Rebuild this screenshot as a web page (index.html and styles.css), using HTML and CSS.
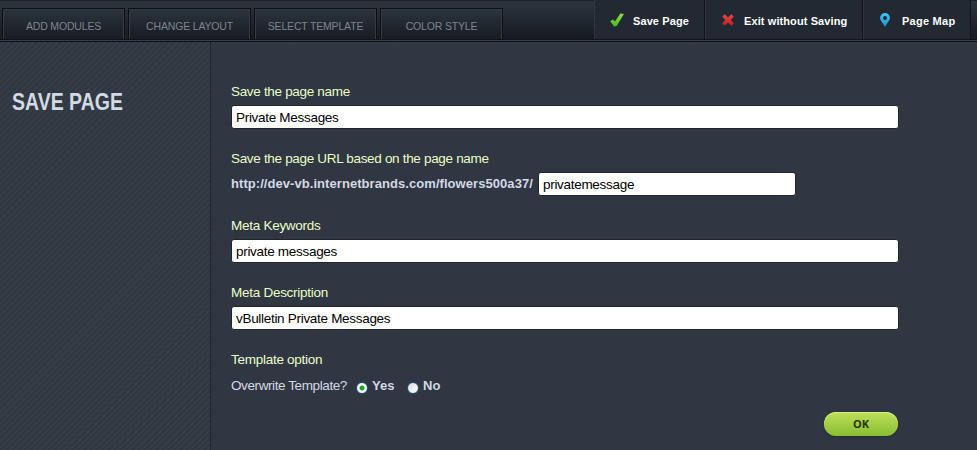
FILE: index.html
```html
<!DOCTYPE html>
<html lang="en">
<head>
<meta charset="utf-8">
<title>Save Page</title>
<link rel="stylesheet" href="styles.css">
</head>
<body>
<header class="toolbar">
  <nav class="tabs">
    <a class="tab">ADD MODULES</a>
    <a class="tab">CHANGE LAYOUT</a>
    <a class="tab">SELECT TEMPLATE</a>
    <a class="tab">COLOR STYLE</a>
  </nav>
  <div class="actions">
    <a class="action save">
      <svg width="14" height="14" viewBox="0 0 14 14"><defs><linearGradient id="g" x2="0" y2="1"><stop stop-color="#8be34a"/><stop offset="1" stop-color="#4cba18"/></linearGradient></defs><path d="M.2 8.2 3 6.5 5 8.5 10.4.4 13.9 1 6.7 13 4.2 13.6Z" fill="url(#g)"/></svg>
      <span>Save Page</span>
    </a>
    <a class="action exit">
      <svg width="12" height="12" viewBox="0 0 12 12"><defs><linearGradient id="r" x2="0" y2="1"><stop stop-color="#ee4545"/><stop offset="1" stop-color="#c51c24"/></linearGradient></defs><path d="M2.7.3 6 3.5 9.3.3 11.8 2.7 8.7 6 11.8 9.2 9.3 11.7 6 8.5 2.7 11.7.2 9.2 3.3 6 .2 2.7Z" fill="url(#r)"/></svg>
      <span>Exit without Saving</span>
    </a>
    <a class="action map">
      <svg width="10" height="14" viewBox="0 0 10 14"><defs><linearGradient id="b" x2="0" y2="1"><stop stop-color="#42c5f8"/><stop offset="1" stop-color="#1593d8"/></linearGradient></defs><path fill-rule="evenodd" d="M5 .1A4.9 4.9 0 0 1 9.9 5C9.9 7.7 7.2 9.6 5 13.9 2.8 9.6.1 7.7.1 5A4.9 4.9 0 0 1 5 .1ZM5 3A2 2 0 1 0 5 7 2 2 0 0 0 5 3Z" fill="url(#b)"/></svg>
      <span>Page Map</span>
    </a>
  </div>
</header>
<div class="body">
  <aside class="sidebar"><h1><span>SAVE PAGE</span></h1></aside>
  <main class="form">
    <section class="field">
      <label class="label label-name" for="name">Save the page name</label>
      <input id="name" class="input" value="Private Messages">
    </section>
    <section class="field">
      <label class="label label-name" for="url">Save the page URL based on the page name</label>
      <div class="url-row"><span class="base">http://dev-vb.internetbrands.com/flowers500a37/</span><input id="url" class="input short" value="privatemessage"></div>
    </section>
    <section class="field">
      <label class="label" for="keys">Meta Keywords</label>
      <input id="keys" class="input" value="private messages">
    </section>
    <section class="field">
      <label class="label" for="desc">Meta Description</label>
      <input id="desc" class="input" value="vBulletin Private Messages">
    </section>
    <section class="option">
      <div class="label">Template option</div>
      <div class="radios">
        <span class="question">Overwrite Template?</span>
        <span class="radio on"></span><b class="yes">Yes</b>
        <span class="radio"></span><b>No</b>
      </div>
    </section>
    <button class="ok">OK</button>
  </main>
</div>
</body>
</html>
```
FILE: styles.css
```css
* { box-sizing: border-box; }
body {
  margin: 0;
  height: 450px;
  overflow: hidden;
  background: #303642;
  color: #d3d9e5;
  font: 13px/16px "Liberation Sans", Arial, sans-serif;
}
.toolbar {
  display: flex;
  justify-content: space-between;
  height: 42px;
  padding: 0 6px 0 2px;
  background:
    linear-gradient(#10151a 0 1px, #3a3f43 1px 2px, #0c1115 2px) 0 100% / 100% 3px no-repeat,
    linear-gradient(#1c2228, #1c2228) 0 0 / 100% 1px no-repeat,
    linear-gradient(#2c353f, #161b21 39px);
}
.tabs { display: flex; gap: 3px; padding-top: 8px; }
.tab {
  width: 123px;
  height: 31px;
  border: 1px solid #0c1014;
  border-bottom: 0;
  box-shadow: inset 1px 1px #363b40, inset -1px 0 #363b40;
  background: linear-gradient(#2b343e, #171c22);
  color: #7d858f;
  font-size: 10.5px;
  line-height: 34px;
  text-align: center;
  letter-spacing: -.17px;
}
.actions { display: flex; height: 39px; }
.action {
  display: flex;
  align-items: center;
  height: 39px;
  padding-top: 3px;
  background: #222932;
  border-right: 1px solid #10151a;
  box-shadow: inset 1px 0 #303741;
  color: #fff;
  font-size: 11px;
  font-weight: bold;
  letter-spacing: .1px;
  white-space: nowrap;
}
.save { width: 111px; padding-left: 16px; gap: 9px; }
.exit { width: 158px; padding-left: 17px; gap: 10px; }
.map { width: 108px; padding-left: 17px; gap: 12px; letter-spacing: .25px; }
.action svg { margin-top: -2px; }
.body {
  display: flex;
  height: 408px;
  background: repeating-linear-gradient(135deg, #353e46 0 1.4px, #303642 1.4px 2.8px) 0 0 / 100% 3px no-repeat;
}
.sidebar {
  flex: none;
  width: 211px;
  padding: 48px 0 0 12px;
  border-right: 1px solid #20262d;
  background: repeating-linear-gradient(135deg, #2f3740 0 1.4px, #353e46 2.4px 3.4px, #2f3740 4.24px);
}
h1 { margin: 0; font-size: 23px; line-height: 25px; color: #d3d9e5; }
h1 span { display: inline-block; transform: scaleX(.848); transform-origin: 0 0; white-space: nowrap; }
.form { flex: 1; display: flex; flex-direction: column; padding: 42px 78px 0 20px; }
.field { height: 67px; }
.label { display: block; color: #e9ffc8; font-size: 13.5px; letter-spacing: -.27px; white-space: nowrap; }
.label-name { letter-spacing: -.32px; }
.input {
  display: block;
  width: 668px;
  height: 24px;
  margin-top: 5px;
  padding: 1px 4px 0;
  border: 1px solid #1e252d;
  border-radius: 3px;
  background: #fff;
  color: #000;
  font: 13.5px "Liberation Sans", Arial, sans-serif;
  letter-spacing: -.3px;
}
.url-row { display: flex; align-items: center; margin-top: 5px; }
.base { width: 307px; font-weight: bold; letter-spacing: .06px; white-space: nowrap; }
.short { width: 258px; margin: 0; }
.option { height: 61px; }
.radios { display: flex; margin-top: 10px; }
.question { width: 125px; font-size: 13.5px; letter-spacing: -.4px; white-space: nowrap; }
.radio {
  width: 12px;
  height: 12px;
  margin: 4px 4px 0 0;
  border: 1px solid #1d5278;
  border-radius: 50%;
  background: linear-gradient(135deg, #dcdcd7, #fff);
}
.on { background: radial-gradient(circle, #21a121 0 2px, #fff 3px); }
.yes { width: 35px; }
.ok {
  align-self: flex-end;
  width: 74px;
  height: 24px;
  margin: -1px 1px 0 0;
  padding: 0;
  border: 0;
  border-radius: 12px;
  background: linear-gradient(#bce058, #8abd35);
  box-shadow: inset 0 1px 1px #d5ef8c, 0 1px 2px #282f38;
  color: #263213;
  font: bold 11px/24px "Open Sans", sans-serif;
}
```
